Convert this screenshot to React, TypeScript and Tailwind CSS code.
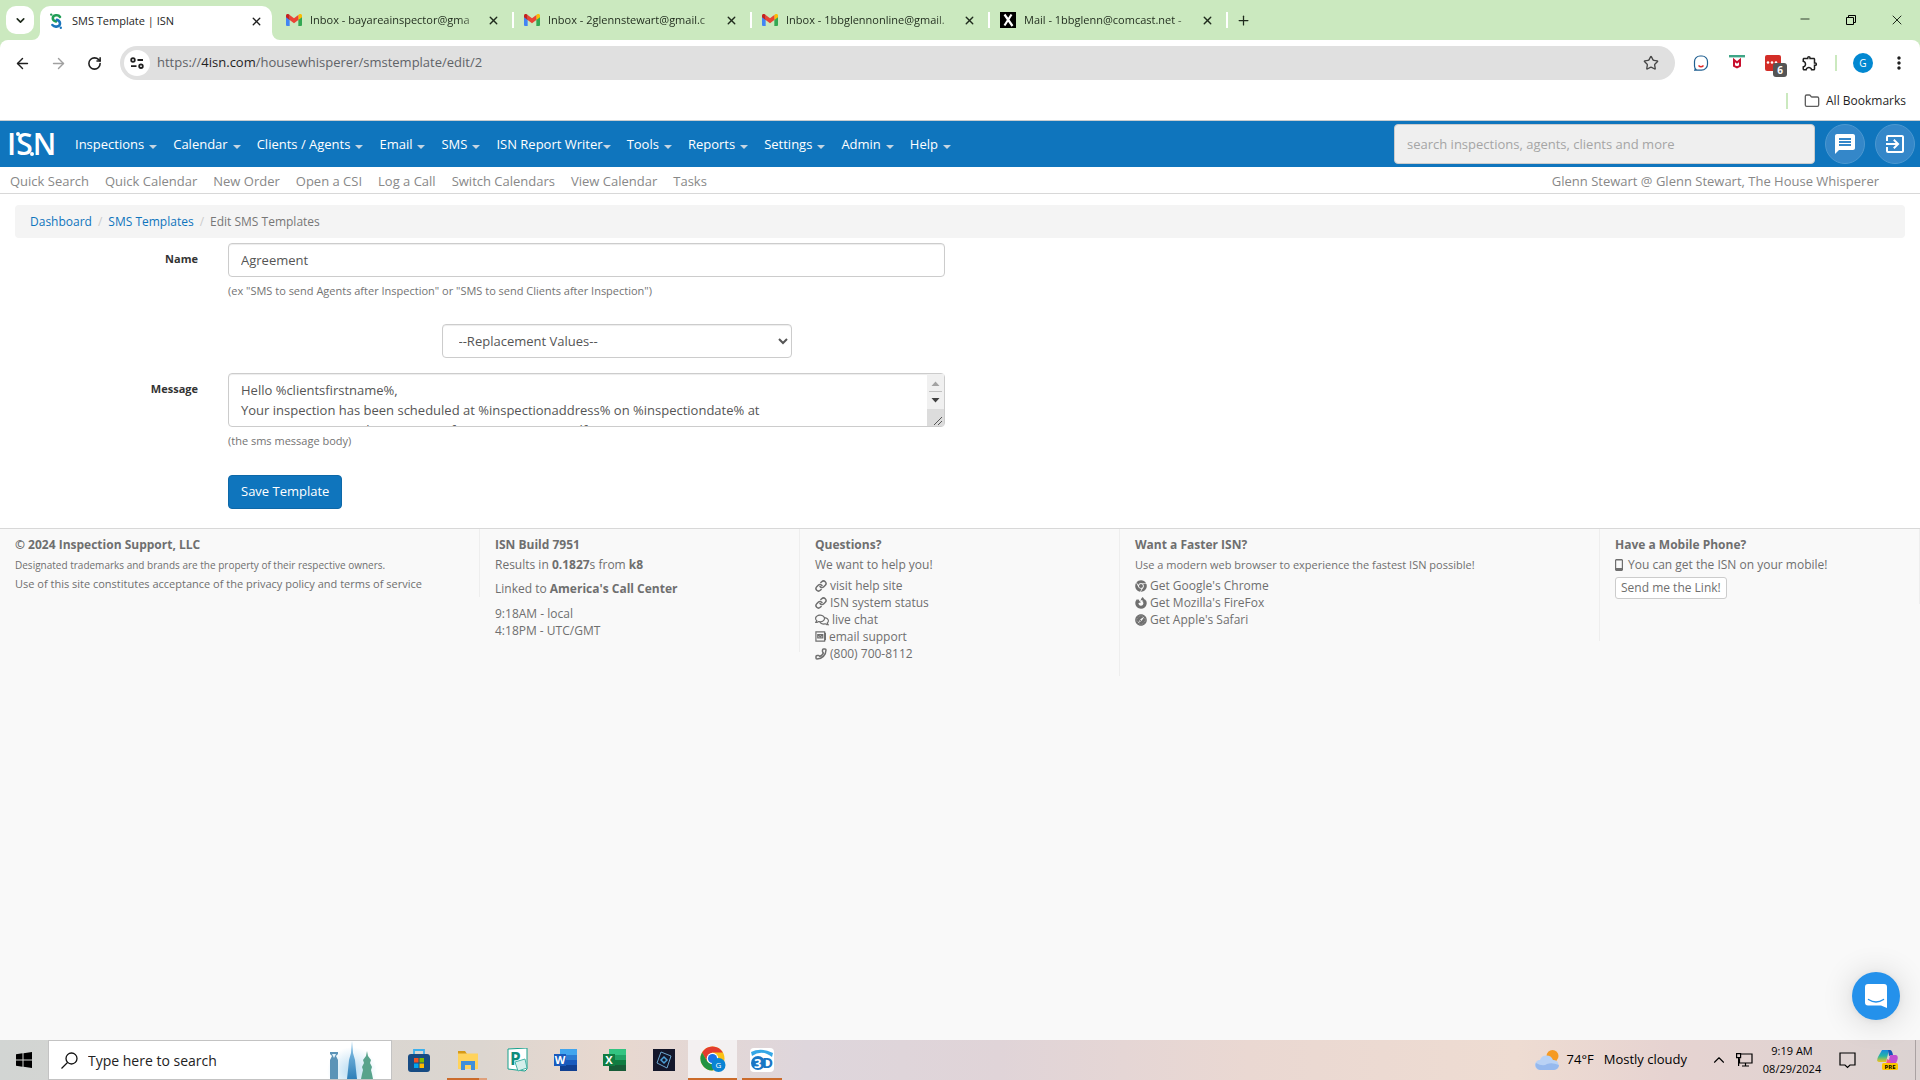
import { ArrowLeft, ArrowRight, ChevronDown, ChevronUp, Folder, Link as LinkIcon, Minus, Phone, Plus, RotateCw, Star, X } from "lucide-react";
import { FaChrome, FaFirefoxBrowser, FaRegComments, FaSafari } from "react-icons/fa";
import { MdExitToApp, MdMessage, MdMoreVert, MdOutlineExtension } from "react-icons/md";

const tabs = [
  { title: "Inbox - bayareainspector@gma", icon: "gmail" },
  { title: "Inbox - 2glennstewart@gmail.c", icon: "gmail" },
  { title: "Inbox - 1bbglennonline@gmail.", icon: "gmail" },
  { title: "Mail - 1bbglenn@comcast.net -", icon: "xfinity" },
];

const menus = ["Inspections", "Calendar", "Clients / Agents", "Email", "SMS", "ISN Report Writer", "Tools", "Reports", "Settings", "Admin", "Help"];

const quickLinks = ["Quick Search", "Quick Calendar", "New Order", "Open a CSI", "Log a Call", "Switch Calendars", "View Calendar", "Tasks"];

const message = `Hello %clientsfirstname%,
Your inspection has been scheduled at %inspectionaddress% on %inspectiondate% at
%inspectiontime%. The inspection fee is %inspectionrealfee%.`;

function GmailIcon() {
  return (
    <svg viewBox="0 0 24 18" className="h-3 w-4 shrink-0" aria-hidden="true">
      <path d="M0 2v14.5A1.5 1.5 0 0 0 1.500 18H5.500V8z" fill="#4285f4" />
      <path d="M24 2v14.500a1.500 1.500 0 0 1-1.500 1.500H18.500V8z" fill="#34a853" />
      <path d="M18.500 1.500V9L24 5V2.500C24 .2 21.400-.9 19.700.5z" fill="#fbbc04" />
      <path d="M5.500 9V1.500L12 6.400l6.500-4.900V9L12 14z" fill="#ea4335" />
      <path d="M0 2.500V5l5.500 4V1.500L4.300.5C2.600-.9 0 .2 0 2.500z" fill="#c5221f" />
    </svg>
  );
}

function IsnFavicon() {
  return (
    <svg viewBox="0 0 16 20" className="h-4 w-4 shrink-0" aria-hidden="true" fill="none" strokeWidth="3.2" strokeLinecap="round">
      <path d="M13 5C11 1.500 4 2.500 4 6.500c0 2.500 2 3.500 4 4" stroke="#1f9d55" />
      <path d="M9 8.500c3 1 4 2.500 4 4.500 0 4-6.500 5.500-9.500 2" stroke="#1b75bc" />
      <circle cx="2" cy="2" r="1.500" fill="#1f9d55" />
      <circle cx="14" cy="18.500" r="1.500" fill="#1b75bc" />
    </svg>
  );
}

function XfinityIcon() {
  return (
    <svg viewBox="0 0 16 16" className="h-4 w-4 shrink-0" aria-hidden="true">
      <rect width="16" height="16" fill="#000" />
      <path d="M4.500 2.500 12.500 14M11.500 2.500l-7 11" stroke="#fff" strokeWidth="2.200" />
    </svg>
  );
}

function TabStrip() {
  return (
    <div className="flex h-10 items-center bg-[#cbe9bf] text-[#1f2a1c]">
      <button aria-label="Search tabs" className="ml-1.5 flex h-7 w-7 items-center justify-center rounded-[10px] bg-white">
        <ChevronDown size={13} strokeWidth={3} />
      </button>
      <div className="relative ml-1.5 flex h-[34px] w-[232px] items-center self-end rounded-t-[10px] bg-white px-2 pb-1 text-[#1f1f1f]">
        <svg className="absolute bottom-0 -left-2 h-2 w-2" viewBox="0 0 8 8" aria-hidden="true"><path d="M8 0v8H0a8 8 0 0 0 8-8z" fill="#fff" /></svg>
        <svg className="absolute -right-2 bottom-0 h-2 w-2" viewBox="0 0 8 8" aria-hidden="true"><path d="M0 0v8h8a8 8 0 0 1-8-8z" fill="#fff" /></svg>
        <IsnFavicon />
        <span className="ml-2 flex-1 text-[11px] leading-4">SMS Template | ISN</span>
        <button aria-label="Close tab" className="mr-px"><X size={13} strokeWidth={2.5} /></button>
      </div>
      <div className="ml-1 flex">
        {tabs.map((tab) => (
          <div key={tab.title} className="flex h-4 w-[238px] items-center border-r-2 border-white pr-3 pl-2.5">
            {tab.icon === "gmail" ? <GmailIcon /> : <XfinityIcon />}
            <span className="ml-2 flex-1 text-[11px] leading-4 whitespace-nowrap [mask-image:linear-gradient(to_right,black_84%,transparent)]">{tab.title}</span>
            <button aria-label={`Close ${tab.title}`}><X size={13} strokeWidth={2.5} /></button>
          </div>
        ))}
      </div>
      <button aria-label="New tab" className="ml-2"><Plus size={15} strokeWidth={2} /></button>
      <div className="ml-auto flex">
        <button aria-label="Minimize" className="flex w-[46px] justify-center"><Minus size={14} strokeWidth={1.5} /></button>
        <button aria-label="Restore" className="flex w-[46px] items-center justify-center">
          <svg viewBox="0 0 12 12" className="h-3 w-3" fill="none" stroke="#000" aria-hidden="true"><path d="M1.500 3.500h7v7h-7zM3.500 3.500v-2h7v7h-2" /></svg>
        </button>
        <button aria-label="Close window" className="flex w-[46px] justify-center"><X size={16} strokeWidth={1.5} /></button>
      </div>
    </div>
  );
}

function AddressBar() {
  return (
    <div className="bg-[#cbe9bf]">
      <div className="flex h-[46px] items-center rounded-t-lg bg-white pr-[11px] pl-3 text-[#1f1f1f]">
        <button aria-label="Back" className="flex w-5 justify-center"><ArrowLeft size={17} /></button>
        <button aria-label="Forward" className="ml-4 flex w-5 justify-center text-[#a0a0a0]"><ArrowRight size={17} /></button>
        <button aria-label="Reload" className="ml-4 flex w-5 justify-center"><RotateCw size={15} strokeWidth={2.5} /></button>
        <div className="ml-4 flex h-[34px] flex-1 items-center rounded-full bg-[#e0e0e0] pr-4 pl-1">
          <button aria-label="View site information" className="flex h-[26px] w-[26px] items-center justify-center rounded-full bg-white">
            <svg viewBox="0 0 14 12" className="h-3 w-3.5" fill="none" stroke="#1f1f1f" strokeWidth="1.800" aria-hidden="true">
              <circle cx="3" cy="3" r="1.800" /><path d="M7.500 3H13M1 9.200h5.500" /><circle cx="11" cy="9.200" r="1.800" />
            </svg>
          </button>
          <p className="ml-[7px] flex-1 text-[13px] text-[#5f6368]">https://<span className="text-[#1f1f1f]">4isn.com</span>/housewhisperer/smstemplate/edit/2</p>
          <button aria-label="Bookmark this tab"><Star size={16} className="text-[#474747]" /></button>
        </div>
        <div className="ml-[18px] flex items-center gap-5">
          <button aria-label="Assistant extension">
            <svg viewBox="0 0 16 16" className="h-4 w-4" fill="none" aria-hidden="true">
              <path d="M1 15.200h7.500a6 6 0 0 0 6-6V6.500a5.500 5.500 0 0 0-5.500-5.500h-2A5.500 5.500 0 0 0 1.500 6.500v4.500q0 2.500 2 4" stroke="#1f5f91" strokeWidth="1.200" />
              <path d="M5.500 10.500q2.500 2.500 5 0" stroke="#e02b2b" strokeWidth="1.500" />
            </svg>
          </button>
          <button aria-label="McAfee">
            <svg viewBox="0 0 16 16" className="h-4 w-4" fill="none" aria-hidden="true">
              <path d="M0 1.200h16" stroke="#3fa587" strokeWidth="2.400" />
              <path d="M5 5v6l3 1.500 3-1.500V5L8 7.500z" stroke="#c8102e" strokeWidth="2" />
            </svg>
          </button>
          <button aria-label="LastPass" className="relative flex h-4 w-4 items-center justify-center rounded-[2px] bg-[#d32d27]">
            <svg viewBox="0 0 16 16" className="h-4 w-4" fill="#fff" aria-hidden="true"><circle cx="3" cy="7.500" r="1.300" /><circle cx="7" cy="7.500" r="1.300" /><circle cx="11" cy="7.500" r="1.300" /></svg>
            <span className="absolute top-2 left-2 flex h-3.5 w-3.5 items-center justify-center rounded-[3px] bg-[#555] text-[10px] font-bold text-white">6</span>
          </button>
          <button aria-label="Extensions"><MdOutlineExtension size={18} /></button>
        </div>
        <span className="ml-4 h-4 w-0.5 bg-[#cbe9bf]" />
        <button aria-label="Profile" className="ml-4 flex h-5 w-5 items-center justify-center rounded-full bg-[#0288d1] text-[10px] text-white">G</button>
        <button aria-label="Chrome menu" className="ml-4"><MdMoreVert size={20} /></button>
      </div>
      <div className="flex h-[34px] items-center justify-end bg-white pr-[14px] pb-1 text-xs text-[#1f1f1f]">
        <span className="h-4 w-0.5 bg-[#cbe9bf]" />
        <Folder size={16} className="ml-4 text-[#5f5f5f]" />
        <a href="#bookmarks" className="ml-1.5">All Bookmarks</a>
      </div>
    </div>
  );
}

function SiteHeader() {
  return (
    <header>
      <nav className="flex h-[47px] items-center border-t border-[#c9cdd0] bg-[#0f75bd] pr-[5px] pl-[7px] text-white">
        <a href="#home" className="relative w-[68px] text-[30px] leading-[46px] font-semibold">
          ISN
          <svg viewBox="0 0 46 28" className="absolute top-2 left-0 h-7 w-[46px]" fill="#fff" aria-hidden="true"><circle cx="11" cy="5" r="2" /><circle cx="25" cy="25" r="2" /></svg>
        </a>
        <ul className="flex gap-4 pt-0.5 text-[13px]">
          {menus.map((menu) => (
            <li key={menu}>
              <button className={menu === "ISN Report Writer" ? "flex items-center" : "flex items-center gap-[5px]"}>
                {menu}
                <span className="mt-1 border-x-4 border-t-4 border-x-transparent border-t-[#c5d5e2]" />
              </button>
            </li>
          ))}
        </ul>
        <input type="search" aria-label="Search" placeholder="search inspections, agents, clients and more" className="ml-auto h-10 w-[421px] rounded border border-[#ccc] bg-[#efefef] px-3 text-[13px] placeholder:text-[#a5a5a5]" />
        <button aria-label="Messages" className="ml-2.5 flex h-10 w-10 items-center justify-center rounded-full border border-[#4c98d0] bg-[#3487c9]"><MdMessage size={24} /></button>
        <button aria-label="Log out" className="ml-2.5 flex h-10 w-10 items-center justify-center rounded-full border border-[#4c98d0] bg-[#3487c9]"><MdExitToApp size={24} /></button>
      </nav>
      <div className="flex h-[27px] items-center justify-between border-b border-[#d8d8d8] pt-[3px] pr-[41px] pl-2.5 text-[13px] text-[#888]">
        <ul className="flex gap-4">
          {quickLinks.map((label) => (
            <li key={label}><a href="#quick">{label}</a></li>
          ))}
        </ul>
        <p>Glenn Stewart @ Glenn Stewart, The House Whisperer</p>
      </div>
    </header>
  );
}

function TemplateForm() {
  return (
    <form className="grid w-1/2 grid-cols-[198px_1fr] gap-x-[30px] pt-[5px] pr-[15px] pb-[19px] text-[#333]" onSubmit={(e) => e.preventDefault()}>
      <label htmlFor="name" className="pt-2 text-right text-[11px] leading-4 font-bold">Name</label>
      <div>
        <input id="name" defaultValue="Agreement" className="block h-[34px] w-full rounded border border-[#ccc] px-3 text-[13px] text-[#555] shadow-[inset_0_1px_1px_rgba(0,0,0,0.075)]" />
        <p className="mt-1.5 text-[11px] leading-4 text-[#737373]">(ex "SMS to send Agents after Inspection" or "SMS to send Clients after Inspection")</p>
      </div>

      <div className="col-start-2 mt-[25px] flex justify-center pl-[60px]">
        <select aria-label="Replacement values" className="h-[34px] w-[350px] rounded border border-[#ccc] bg-white px-3 text-[13px] text-[#555] shadow-[inset_0_1px_1px_rgba(0,0,0,0.075)]">
          <option>--Replacement Values--</option>
        </select>
      </div>

      <label htmlFor="message" className="mt-[15px] pt-2 text-right text-[11px] leading-4 font-bold">Message</label>
      <div className="mt-[15px]">
        <div className="relative">
          <textarea id="message" defaultValue={message} className="block h-[54px] w-full resize-none overflow-hidden rounded border border-[#ccc] py-1.5 pr-8 pl-3 text-[13px] leading-5 text-[#555] shadow-[inset_0_1px_1px_rgba(0,0,0,0.075)]" />
          {/* Scrollbar and resize grip */}
          <svg viewBox="0 0 17 52" className="absolute top-px right-px h-[52px] w-[17px]" aria-hidden="true">
            <path d="M0 0h17v52H0z" fill="#f0f0f0" />
            <path d="m4.500 12 4-4.500 4 4.500z" fill="#a3a3a3" />
            <path d="M2 17.500h13" stroke="#c1c1c1" />
            <path d="m4.500 24 4 4.500 4-4.500z" fill="#404040" />
            <path d="M0 35h17v17H0z" fill="#dcdcdc" />
            <path d="m7 51 8-8m-4 8 4-4" stroke="#555" />
          </svg>
        </div>
        <p className="mt-1.5 text-[11px] leading-4 text-[#737373]">(the sms message body)</p>
        <button className="mt-[26px] h-[34px] rounded border border-[#0d68a8] bg-[#0f75bd] px-3 text-[13px] text-white">Save Template</button>
      </div>
    </form>
  );
}

function SiteFooter() {
  return (
    <footer className="grid flex-1 grid-cols-12 items-start border-t border-[#d8d8d8] bg-[#f9f9f9] text-xs leading-[17px] text-[#6f6f6f]">
      <section className="col-span-3 h-[68px] border-r border-[#eee] px-[15px] pt-[7px]">
        <h2 className="font-bold">© 2024 Inspection Support, LLC</h2>
        <p className="mt-1 text-[10px] leading-4">Designated trademarks and brands are the property of their respective owners.</p>
        <p className="mt-0.5 text-[11px]">Use of this site constitutes acceptance of the <a href="#privacy">privacy policy</a> and <a href="#terms">terms of service</a></p>
      </section>
      <section className="col-span-2 h-[123px] border-r border-[#eee] px-[15px] pt-[7px]">
        <h2 className="font-bold">ISN Build 7951</h2>
        <p className="mt-[3px]">Results in <b>0.1827</b>s from <b>k8</b></p>
        <p className="mt-[7px]">Linked to <b>America's Call Center</b></p>
        <p className="mt-2">9:18AM - local<br />4:18PM - UTC/GMT</p>
      </section>
      <section className="col-span-2 h-[147px] border-r border-[#eee] px-[15px] pt-[7px]">
        <h2 className="font-bold">Questions?</h2>
        <p className="mt-[3px]">We want to help you!</p>
        <ul className="mt-1">
          <li><a href="#help" className="flex items-center gap-[3px]"><LinkIcon size={12} strokeWidth={3} />visit help site</a></li>
          <li><a href="#status" className="flex items-center gap-[3px]"><LinkIcon size={12} strokeWidth={3} />ISN system status</a></li>
          <li><a href="#chat" className="flex items-center gap-[3px]"><FaRegComments size={14} />live chat</a></li>
          <li>
            <a href="#email" className="flex items-center gap-[3px]">
              <svg viewBox="0 0 12 12" className="h-[11px] w-[11px]" fill="none" stroke="currentColor" strokeWidth="1.300" aria-hidden="true"><path d="M1 1h9.500v10H1zM3 4h5.500v3.500H3zM3 4.500l2.750 1.500L8.500 4.500M11.500 2v8" /></svg>
              email support
            </a>
          </li>
          <li><a href="tel:8007008112" className="flex items-center gap-[3px]"><Phone size={12} strokeWidth={3} className="-scale-x-100" />(800) 700-8112</a></li>
        </ul>
      </section>
      <section className="col-span-3 h-[112px] border-r border-[#eee] px-[15px] pt-[7px]">
        <h2 className="font-bold">Want a Faster ISN?</h2>
        <p className="mt-[3px] text-[11px]">Use a modern web browser to experience the fastest ISN possible!</p>
        <ul className="mt-1">
          <li><a href="#chrome" className="flex items-center gap-[3px]"><FaChrome size={12} />Get Google's Chrome</a></li>
          <li><a href="#firefox" className="flex items-center gap-[3px]"><FaFirefoxBrowser size={12} />Get Mozilla's FireFox</a></li>
          <li><a href="#safari" className="flex items-center gap-[3px]"><FaSafari size={12} />Get Apple's Safari</a></li>
        </ul>
      </section>
      <section className="col-span-2 h-[75px] border-r border-[#eee] px-[15px] pt-[7px]">
        <h2 className="font-bold">Have a Mobile Phone?</h2>
        <p className="mt-[3px] flex items-center gap-[5px]">
          <svg viewBox="0 0 8 12" className="h-3 w-2" aria-hidden="true"><path d="M1 0h6l1 1v10l-1 1H1l-1-1V1zm.200 1.500v7.500h5.600V1.500z" fill="currentColor" fillRule="evenodd" /></svg>
          You can get the ISN on your mobile!
        </p>
        <button className="mt-1 h-[22px] rounded-[3px] border border-[#ccc] bg-white px-[5px] leading-4">Send me the Link!</button>
      </section>
    </footer>
  );
}

function OfficeIcon({ letter, app }: { letter: string; app: "word" | "excel" }) {
  const word = app === "word";
  return (
    <svg viewBox="0 0 24 24" className="h-6 w-6" aria-hidden="true">
      <path d="M6 1h17v6H6z" fill={word ? "#41a5ee" : "#33c481"} />
      <path d="M6 7h17v5H6z" fill={word ? "#2b7cd3" : "#21a366"} />
      <path d="M6 12h17v5H6z" fill={word ? "#185abd" : "#107c41"} />
      <path d="M6 17h17v6H6z" fill={word ? "#103f91" : "#185c37"} />
      <path d="M0 6h12v12H0z" fill={word ? "#185abd" : "#107c41"} />
      <text x="6" y="16" textAnchor="middle" fill="#fff" fontSize="11" fontWeight="700">{letter}</text>
    </svg>
  );
}

function Taskbar() {
  return (
    <div className="flex h-10 items-center bg-[linear-gradient(to_right,#d2d5d3,#dcd6d0_25%,#e8d8cf_32%,#ded6dc_42%,#e0d4d8_52%,#ead8d2_65%,#eedcd2_79%,#e6d3d1_87%,#dcd3d2)] text-black">
      <button aria-label="Start" className="flex h-full w-12 items-center justify-center">
        <svg viewBox="0 0 16 16" className="h-4 w-4" aria-hidden="true"><path d="M0 2.200 6.500 1.300v6.300H0zM7.500 1.200 16 0v7.600H7.500zM0 8.400h6.500v6.300L0 13.800zM7.500 8.400H16V16l-8.500-1.200z" /></svg>
      </button>
      <label className="flex h-10 w-[344px] items-center border border-[#c3c3c3] bg-white pl-3">
        <svg viewBox="0 0 17 17" className="h-[17px] w-[17px] shrink-0" fill="none" stroke="#111" strokeWidth="1.300" aria-hidden="true"><circle cx="10.500" cy="6.500" r="5.500" /><path d="m6.500 10.500-6 6" /></svg>
        <input aria-label="Type here to search" placeholder="Type here to search" className="ml-2.5 w-0 flex-1 text-[14px] placeholder:text-[#222]" />
        <svg viewBox="0 0 64 38" className="h-[38px] w-16" aria-hidden="true">
          <defs>
            <radialGradient id="sky"><stop stopColor="#b8dcf2" /><stop offset="1" stopColor="#fff" /></radialGradient>
            <linearGradient id="tower" x2="0" y2="1"><stop stopColor="#8fc7ea" /><stop offset="1" stopColor="#2d7fb8" /></linearGradient>
          </defs>
          <ellipse cx="25" cy="30" rx="25" ry="24" fill="url(#sky)" />
          <path d="M3 11h8v2l-2 2 2 4v19H3V19l2-4-2-2z" fill="#5b93b7" />
          <path d="M5 13h4l-2 4z" fill="#e4f3fb" />
          <path d="M25 0l1 12 2 7 1 10 1 9H20l1-9 1-10 2-7z" fill="url(#tower)" />
          <path d="M40 10l1 5 3 4-1 3 2 4-1 3 1 4 1 5H34l1-5 1-4-1-3 2-4-1-3 3-4z" fill="#58a38c" />
        </svg>
      </label>
      <div className="ml-0.5 flex h-full">
        <button aria-label="Microsoft Store" className="flex w-[49px] items-center justify-center">
          <svg viewBox="0 0 24 24" className="h-6 w-6" aria-hidden="true">
            <path d="M7 7V2h10v5" fill="none" stroke="#3bb0ee" strokeWidth="1.800" />
            <rect x="1" y="6" width="22" height="18" rx="3" fill="#174b83" />
            <path d="M7 10h4.500v4.500H7z" fill="#f25022" /><path d="M12.500 10H17v4.500h-4.500z" fill="#7fba00" />
            <path d="M7 15.500h4.500V20H7z" fill="#00a4ef" /><path d="M12.500 15.500H17V20h-4.500z" fill="#ffb900" />
          </svg>
        </button>
        <button aria-label="File Explorer" className="relative flex w-[49px] items-center justify-center">
          <svg viewBox="0 0 24 24" className="h-6 w-6" aria-hidden="true">
            <path d="M2 3h7l2 3H2z" fill="#d69a16" /><path d="M2 5.500h20V21H2z" fill="#ffd35c" />
            <path d="M5 13h14v9h-4v-5H9v5H5z" fill="#3f8fdb" />
          </svg>
          <span className="absolute bottom-0 left-1 h-0.5 w-8 bg-[#cb6b2b]" />
          <span className="absolute bottom-0 left-9 h-0.5 w-2 bg-[#dfa07b]" />
        </button>
        <button aria-label="Publisher" className="flex w-[49px] items-center justify-center">
          <svg viewBox="0 0 24 24" className="h-6 w-6" aria-hidden="true">
            <path d="M3 1 22 0v21l-2 2-17-2z" fill="#fff" stroke="#17a08c" />
            <text x="5" y="17" fill="#0e8d7b" fontSize="17" fontWeight="700">P</text>
            <path d="m10 14 10-3 2 9-9 3z" fill="#d4efeb" stroke="#47b5a6" />
          </svg>
        </button>
        <button aria-label="Word" className="flex w-[49px] items-center justify-center"><OfficeIcon letter="W" app="word" /></button>
        <button aria-label="Excel" className="flex w-[49px] items-center justify-center"><OfficeIcon letter="X" app="excel" /></button>
        <button aria-label="Photoshop Elements" className="flex w-[49px] items-center justify-center">
          <svg viewBox="0 0 22 22" className="h-[22px] w-[22px]" fill="none" aria-hidden="true">
            <path d="M0 0h22v22H0z" fill="#14172b" />
            <path d="m8 3 10 4-4 12-10-5z" stroke="#6ba6cf" strokeWidth="1" /><path d="M11 8l3 3-3 3-3-3z" stroke="#4a9ed6" strokeWidth="1.500" />
          </svg>
        </button>
        <button aria-label="Google Chrome" className="flex w-[49px] items-center justify-center border-b-2 border-[#cb6b2b] bg-[#f3f0f1]">
          <svg viewBox="0 0 26 26" className="h-[26px] w-[26px]" aria-hidden="true">
            <circle cx="12.500" cy="12.500" r="12" fill="#fbc116" />
            <path d="M2.100 6.500a12 12 0 0 1 20.800 0H12.500L7.300 15.500z" fill="#e33b2e" />
            <path d="M2.100 6.500a12 12 0 0 0 10.400 18L17.700 15.500H7.300z" fill="#229342" />
            <circle cx="12.500" cy="12.500" r="5.800" fill="#fff" /><circle cx="12.500" cy="12.500" r="4.600" fill="#1a73e8" />
            <circle cx="18.500" cy="19" r="7" fill="#0b84d4" />
            <text x="18.500" y="22" textAnchor="middle" fill="#fff" fontSize="8">G</text>
          </svg>
        </button>
        <button aria-label="3D Viewer" className="relative flex w-[49px] items-center justify-center">
          <svg viewBox="0 0 24 24" className="h-6 w-6" aria-hidden="true">
            <rect width="24" height="24" rx="4" fill="#fff" />
            <path d="M1 4q10-5 22 1l-1 4Q12 1 2 8z" fill="#35a7e6" />
            <circle cx="8" cy="15" r="7" fill="#1976c4" />
            <text x="4" y="20" fill="#fff" fontSize="13" fontWeight="700">3</text>
            <text x="12" y="20" fill="#1976c4" fontSize="15" fontWeight="700">D</text>
          </svg>
          <span className="absolute bottom-0 left-[5px] h-0.5 w-10 bg-[#cb6b2b]" />
        </button>
      </div>

      {/* System tray */}
      <div className="ml-auto flex h-full items-center">
        <button className="flex items-center text-[13px]">
          <svg viewBox="0 0 24 20" className="h-5 w-6" aria-hidden="true">
            <circle cx="17.500" cy="6" r="6" fill="#f59a23" />
            <path d="M5 20a5 5 0 0 1 0-10 7 7 0 0 1 13 0 5 5 0 0 1 1 10z" fill="#b9d2f5" />
            <path d="M5 20a5 5 0 0 1-4-7q7 4 11 1 5-2 12 1a5 5 0 0 1-5 5z" fill="#96b9ee" />
          </svg>
          <span className="ml-2">74°F</span>
          <span className="ml-2.5">Mostly cloudy</span>
        </button>
        <button aria-label="Show hidden icons" className="ml-[23px]"><ChevronUp size={18} strokeWidth={1.5} /></button>
        <button aria-label="Network" className="ml-2">
          <svg viewBox="0 0 17 14" className="h-3.5 w-[17px]" fill="none" stroke="#000" strokeWidth="1.200" aria-hidden="true"><path d="M5 1h11v9H3.500V5.500M9.500 10v3M6 13h7M.6.600h4v4h-4zM2.600 4.500V13" /></svg>
        </button>
        <button className="ml-2 w-[62px] text-center text-[11px] leading-[18px]">9:19 AM<br />08/29/2024</button>
        <button aria-label="Notifications" className="ml-4">
          <svg viewBox="0 0 17 17" className="h-[17px] w-[17px]" fill="none" stroke="#000" strokeWidth="1.200" aria-hidden="true"><path d="M1 1h15v12h-5l-2.500 2.500L6 13H1z" /></svg>
        </button>
        <button aria-label="Copilot" className="mr-4 ml-[21px]">
          <svg viewBox="0 0 22 20" className="h-5 w-[22px]" aria-hidden="true">
            <defs><linearGradient id="cpl" x2="0" y2="1"><stop stopColor="#1488e0" /><stop offset=".5" stopColor="#25b5a5" /><stop offset="1" stopColor="#f2c51b" /></linearGradient></defs>
            <path d="M5 0h7L9 12H2Q-1 12 1 7z" fill="url(#cpl)" />
            <path d="M11 0h2q2 0 3 5l-4 1z" fill="#1656b8" />
            <path d="M13 5h6q3 1 1 6l-2 4h-7z" fill="#c14fd0" /><path d="m10 9 4 2-2 4H9z" fill="#f0598f" />
            <rect x="5" y="13" width="16" height="7" rx="1.500" fill="#ffc800" />
            <text x="13" y="19" textAnchor="middle" fontSize="6" fontWeight="700">PRE</text>
          </svg>
        </button>
        <span className="mr-1 h-full w-px bg-[#aaa2a2]" />
      </div>
    </div>
  );
}

export default function App() {
  return (
    <div className="flex min-h-screen flex-col bg-white font-['Open_Sans','Noto_Sans',sans-serif]">
      <TabStrip />
      <AddressBar />
      <div className="relative flex flex-1 flex-col">
        <SiteHeader />
        <main>
          <ol className="mx-[15px] mt-[11px] flex h-[33px] items-center rounded bg-[#f4f4f4] px-[15px] text-xs text-[#777]">
            <li><a href="#dashboard" className="text-[#0f75bd]">Dashboard</a></li>
            <li className="px-1.5 text-[#ccc]">/</li>
            <li><a href="#templates" className="text-[#0f75bd]">SMS Templates</a></li>
            <li className="px-1.5 text-[#ccc]">/</li>
            <li>Edit SMS Templates</li>
          </ol>
          <TemplateForm />
        </main>
        <SiteFooter />
        <button aria-label="Open chat" className="absolute right-5 bottom-5 flex h-12 w-12 items-center justify-center rounded-full bg-[#2491eb] shadow-[0_1px_6px_rgba(0,0,0,0.06),0_2px_32px_rgba(0,0,0,0.16)]">
          <svg viewBox="0 0 22 24" className="h-6 w-[22px]" aria-hidden="true">
            <path d="M3 0h16q3 0 3 3v21l-6-2.500H3q-3 0-3-3V3q0-3 3-3z" fill="#fff" />
            <path d="M3.500 15.500q7.500 5 15 0" fill="none" stroke="#2491eb" strokeWidth="1.500" strokeLinecap="round" />
          </svg>
        </button>
      </div>
      <Taskbar />
    </div>
  );
}
